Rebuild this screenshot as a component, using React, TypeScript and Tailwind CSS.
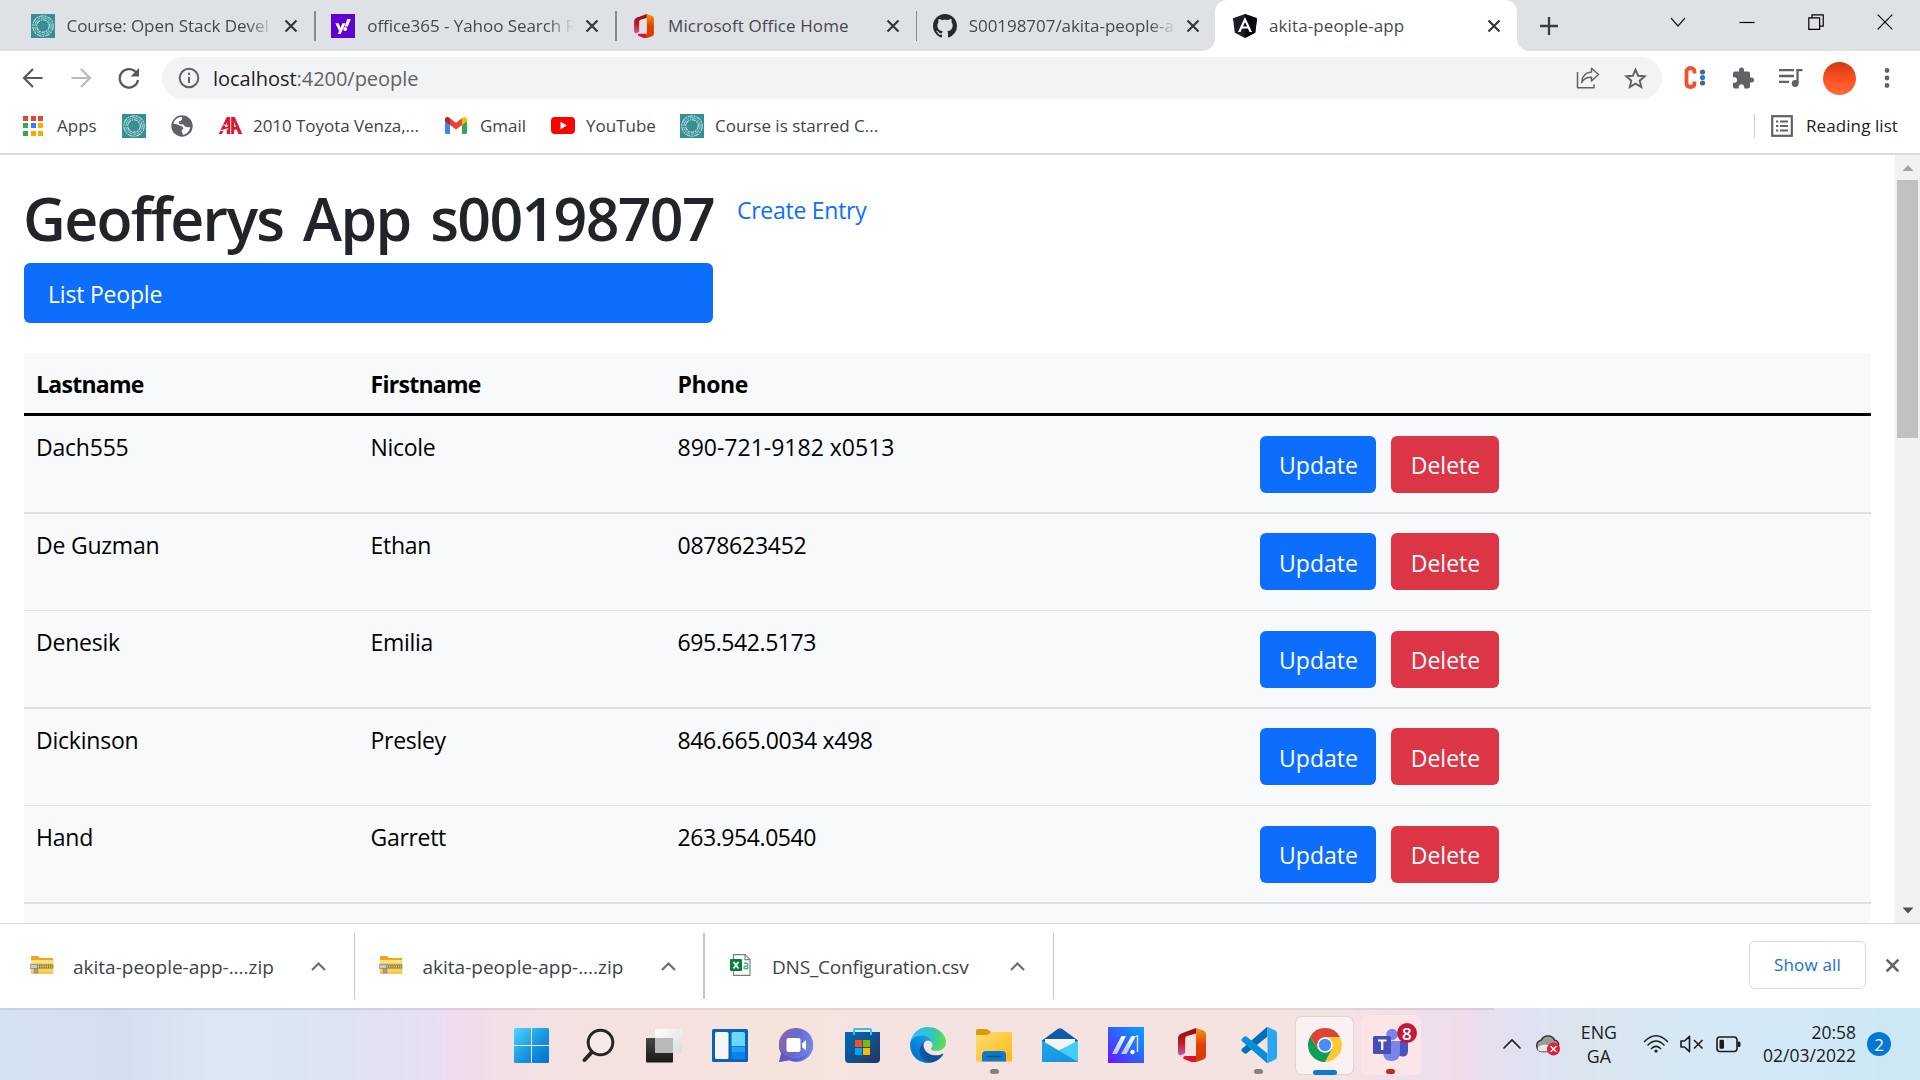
import React, { ReactNode } from "react";

/* ---------- favicons and toolbar icons ---------- */

function CourseIcon() {
  return (
    <svg width="24" height="24" viewBox="0 0 24 24" className="shrink-0">
      <rect width="24" height="24" fill="#378f96" />
      <g fill="none" stroke="#c5e4e5">
        <circle cx="12" cy="12" r="10.2" strokeWidth="1.2" strokeDasharray="5 .9 2 .8" opacity=".85" />
        <circle cx="12" cy="12" r="8.2" strokeWidth="1" strokeDasharray="3 1 6 .8" opacity=".8" />
        <circle cx="12" cy="12" r="6.3" strokeWidth="1.1" strokeDasharray="4 .9 1.6 .7" />
      </g>
    </svg>
  );
}

function YahooIcon() {
  return (
    <svg width="24" height="24" viewBox="0 0 24 24" className="shrink-0">
      <rect width="24" height="24" fill="#5f01d1" />
      <path d="M4.4 9.3h3.2l1.9 4.5 1.9-4.5h3.1L9.8 20H6.7l1.4-3.1z" fill="#fff" />
      <path d="M16.3 5h3.5l-3 7.6h-3.1z" fill="#fff" />
      <circle cx="14.2" cy="15" r="1.9" fill="#fff" />
    </svg>
  );
}

function OfficeIcon({ id, w, h }: { id: string; w: number; h: number }) {
  return (
    <svg width={w} height={h} viewBox="0 0 28 34" className="shrink-0">
      <defs>
        <linearGradient id={id + "a"} x1="0" y1="0" x2="0" y2="1">
          <stop offset="0" stopColor="#8e0b10" />
          <stop offset=".55" stopColor="#c11d20" />
          <stop offset="1" stopColor="#c05eb0" />
        </linearGradient>
        <linearGradient id={id + "b"} x1="0" y1="0" x2="0" y2="1">
          <stop offset="0" stopColor="#f79410" />
          <stop offset=".5" stopColor="#dd4208" />
          <stop offset="1" stopColor="#d83b01" />
        </linearGradient>
      </defs>
      <path d="M18 0 3.4 5.4Q0 7 0 10v14.4c0 2.6 2.6 4 4.6 2.4l2.6-1.7V10.4q0-1.6 1.8-2.3L18 5.5z" fill={"url(#" + id + "a)"} />
      <path d="M18 0l7.4 2.4Q28 3.4 28 6v22q0 2.6-2.6 3.6L18 34z" fill={"url(#" + id + "b)"} />
      <path d="M18 28H7.5c-2.6 0-3 2.2-1 3.2l6.4 2.5c1.5.5 3.6.4 5.1.3z" fill="#dd1430" />
    </svg>
  );
}

function GithubIcon() {
  return (
    <svg width="24" height="24" viewBox="0 0 16 16" className="shrink-0" fill="#24292f">
      <path d="M8 0C3.58 0 0 3.58 0 8c0 3.54 2.29 6.53 5.47 7.59.4.07.55-.17.55-.38 0-.19-.01-.82-.01-1.49-2.01.37-2.53-.49-2.69-.94-.09-.23-.48-.94-.82-1.13-.28-.15-.68-.52-.01-.53.63-.01 1.08.58 1.23.82.72 1.21 1.87.87 2.33.66.07-.52.28-.87.51-1.07-1.78-.2-3.64-.89-3.64-3.95 0-.87.31-1.59.82-2.15-.08-.2-.36-1.02.08-2.12 0 0 .67-.21 2.2.82.64-.18 1.32-.27 2-.27s1.36.09 2 .27c1.53-1.04 2.2-.82 2.2-.82.44 1.1.16 1.92.08 2.12.51.56.82 1.27.82 2.15 0 3.07-1.87 3.75-3.65 3.95.29.25.54.73.54 1.48 0 1.07-.01 1.93-.01 2.2 0 .21.15.46.55.38A8.01 8.01 0 0 0 16 8c0-4.42-3.58-8-8-8z" />
    </svg>
  );
}

function AngularIcon() {
  return (
    <svg width="24" height="24" viewBox="0 0 24 24" className="shrink-0">
      <path d="M12 0 0 4.2l1.8 14.6L12 24l10.200-5.200L24 4.200z" fill="#1b1f29" />
      <path d="M12 0v24l10.200-5.200L24 4.200z" fill="#05070d" />
      <path d="M12 3 5 18h2.600l1.400-3.500h6l1.400 3.500H19zm0 5 2.100 4.500H9.900z" fill="#fff" fillRule="evenodd" />
    </svg>
  );
}

function Cross({ size, color, width }: { size: number; color: string; width: number }) {
  return (
    <svg width={size} height={size} viewBox="0 0 14 14" className="shrink-0">
      <path d="M1.500 1.500l11 11m0-11l-11 11" stroke={color} strokeWidth={width} fill="none" />
    </svg>
  );
}

function AppsIcon() {
  const colors = ["#ea4335", "#ea4335", "#ea4335", "#34a853", "#2684fc", "#f9ab00", "#34a853", "#f9ab00", "#f9ab00"];
  return (
    <div className="grid h-5 w-5 shrink-0 grid-cols-3 gap-[2.500px]">
      {colors.map((c, i) => (
        <span key={i} style={{ backgroundColor: c }} />
      ))}
    </div>
  );
}

function GmailIcon() {
  return (
    <svg width="22" height="17" viewBox="0 0 22 17" className="shrink-0">
      <path d="M0 3v12.500Q0 17 1.500 17H5V7z" fill="#4285f4" />
      <path d="M22 3v12.500q0 1.500-1.500 1.500H17V7z" fill="#34a853" />
      <path d="M17 1.200V8l5-3.800V2.300C22 .2 19.700-.7 18 .5z" fill="#fbbc04" />
      <path d="M5 8V1.200l6 4.500 6-4.500V8l-6 4.500z" fill="#ea4335" />
      <path d="M0 2.300v1.900L5 8V1.200L4 .5C2.300-.7 0 .2 0 2.300z" fill="#c5221f" />
    </svg>
  );
}

/* ---------- browser chrome ---------- */

function Tab({ icon, title, active = false, last = false, wide = false }: { icon: ReactNode; title: string; active?: boolean; last?: boolean; wide?: boolean }) {
  return (
    <div className={active ? "relative -ml-[3px] flex h-full w-[302px] items-center rounded-t-[12px] bg-white pl-[18px]" : "relative flex h-full w-[300.750px] items-center pl-[15.500px]"}>
      {active && (
        <>
          <span className="absolute bottom-0 -left-[12px] h-3 w-3 bg-[radial-gradient(circle_at_0_0,#dee1e6_11.500px,#fff_12px)]" />
          <span className="absolute -right-[12px] bottom-0 h-3 w-3 bg-[radial-gradient(circle_at_100%_0,#dee1e6_11.500px,#fff_12px)]" />
        </>
      )}
      <span className="flex w-6 shrink-0 justify-center">{icon}</span>
      <span
        className={
          "ml-3 w-[207px] shrink-0 text-[17px] whitespace-nowrap text-[#45494d] " +
          (wide ? "tracking-[-0.050px] [mask-image:linear-gradient(to_right,#000_87%,transparent_100%)]" : "tracking-[0.100px]")
        }
      >
        {title}
      </span>
      <span className="ml-[10.500px] flex">
        <Cross size={14} color="#35383b" width={2.200} />
      </span>
      {!active && !last && <span className="ml-auto h-[30px] w-[1.500px] bg-[#85888c]" />}
    </div>
  );
}

function TabStrip() {
  return (
    <div className="flex h-[51px] bg-[#dee1e6] pl-[15px]">
      <Tab icon={<CourseIcon />} title="Course: Open Stack Devel" wide />
      <Tab icon={<YahooIcon />} title="office365 - Yahoo Search R" wide />
      <Tab icon={<OfficeIcon id="of1" w={20} h={24} />} title="Microsoft Office Home" />
      <Tab icon={<GithubIcon />} title="S00198707/akita-people-a" wide last />
      <Tab icon={<AngularIcon />} title="akita-people-app" active />
      <div className="flex flex-1 items-center">
        <svg width="18" height="18" viewBox="0 0 18 18" className="ml-[23px]">
          <path d="M9 0v18M0 9h18" stroke="#3a3d41" strokeWidth="2.300" />
        </svg>
        <div className="-mt-[8px] mr-[27px] ml-auto flex items-center gap-[53px]">
          <svg width="16" height="16" viewBox="0 0 16 16" fill="none" stroke="#202124" strokeWidth="1.200">
            <path d="M1 4l7 8 7-8" />
          </svg>
          <svg width="16" height="16" viewBox="0 0 16 16" fill="none" stroke="#000" strokeWidth="1.200">
            <path d="M.5 8.500h15" />
          </svg>
          <svg width="16" height="16" viewBox="0 0 16 16" fill="none" stroke="#000" strokeWidth="1.200">
            <path d="M.8 3.800h10.800v11.500H.8zM4 3.500V.8h11.200v11.300h-3.400" />
          </svg>
          <svg width="16" height="16" viewBox="0 0 16 16" fill="none" stroke="#000" strokeWidth="1.200">
            <path d="M.7.7l14.600 14.600M15.300.7L.7 15.300" />
          </svg>
        </div>
      </div>
    </div>
  );
}

function Toolbar() {
  return (
    <div className="flex h-[54px] items-center bg-white pl-[20px]">
      <svg width="26" height="24" viewBox="0 0 26 24" fill="none" stroke="#55595e" strokeWidth="2.200">
        <path d="M22.500 12H4.500M13 3l-9 9 9 9" />
      </svg>
      <svg width="26" height="24" viewBox="0 0 26 24" fill="none" stroke="#b9bbbe" strokeWidth="2.200" className="ml-[22px]">
        <path d="M3.500 12h18M13 3l9 9-9 9" />
      </svg>
      <svg width="22" height="22" viewBox="0 0 22 22" className="ml-[24px]">
        <path d="M18.600 6.200A9.200 9.200 0 1 0 20 13" fill="none" stroke="#55595e" strokeWidth="2.300" />
        <path d="M21 1v8.500h-8.500z" fill="#55595e" />
      </svg>
      <div className="ml-[22px] flex h-[42px] w-[1500px] items-center rounded-full bg-[#f1f3f4] pl-[16px]">
        <svg width="22" height="22" viewBox="0 0 22 22" fill="none" stroke="#5f6368" strokeWidth="2">
          <circle cx="11" cy="11" r="9.300" />
          <path d="M11 10v6M11 5.800v2.300" />
        </svg>
        <span className="ml-[13px] pt-[2px] text-[20px] tracking-[-0.030px] whitespace-nowrap text-[#5f6368]">
          <span className="text-[#202124]">localhost</span>:4200/people
        </span>
        <svg width="24" height="24" viewBox="0 0 24 24" fill="none" stroke="#5f6368" strokeWidth="1.500" className="ml-auto" strokeLinejoin="round">
          <path d="M1.500 6v15.700H18V18.500" />
          <path d="M15.500 2.200l7 6.300-7 6.500v-3.800c-4.500-.2-7.700 1.300-9.800 5.300.4-6 3.800-10.200 9.800-10.600z" />
        </svg>
        <svg width="23" height="23" viewBox="0 0 24 24" fill="none" stroke="#5f6368" strokeWidth="2" className="mr-[15px] ml-[24px]">
          <path d="M12 2.800l2.700 6.300 6.900.6-5.200 4.600 1.600 6.700L12 17.400 6 21l1.600-6.700-5.200-4.600 6.900-.6z" />
        </svg>
      </div>
      <svg width="24" height="26" viewBox="0 0 24 26" className="ml-[21px]">
        <path d="M11.500 8.500V7q0-4-4-4t-4 4v11q0 4 4 4t4-4v-1.500" fill="none" stroke="#f4512c" strokeWidth="3.800" />
        <circle cx="19.500" cy="7" r="2.600" fill="#5f6368" />
        <circle cx="19.500" cy="18" r="2.600" fill="#5f6368" />
        <circle cx="19.500" cy="12.500" r="2.600" fill="#1a7fe0" />
      </svg>
      <svg width="24" height="25" viewBox="0 0 24 24" fill="#5f6368" className="ml-[24px]">
        <path d="M20.500 11H19V7c0-1.100-.9-2-2-2h-4V3.500a2.500 2.500 0 0 0-5 0V5H4c-1.100 0-1.990.9-1.990 2v3.800H3.500c1.490 0 2.700 1.210 2.700 2.700s-1.210 2.700-2.700 2.700H2V20c0 1.100.9 2 2 2h3.800v-1.500c0-1.490 1.210-2.700 2.700-2.700s2.700 1.210 2.700 2.700V22H17c1.100 0 2-.9 2-2v-4h1.500a2.500 2.500 0 0 0 0-5z" />
      </svg>
      <svg width="25" height="22" viewBox="0 0 25 22" fill="none" stroke="#5f6368" strokeWidth="2.300" className="ml-[23px]">
        <path d="M1 3.200h15M1 9h15M1 14.800h10M24.500 3.200h-5V16" />
        <circle cx="17.200" cy="16.500" r="2.300" fill="#5f6368" />
      </svg>
      <span className="ml-[20px] h-[33px] w-[33px] rounded-full bg-linear-to-b from-[#cf3a15] via-[#fb4f1f] to-[#ff6c3a]" />
      <svg width="6" height="22" viewBox="0 0 6 22" fill="#5f6368" className="ml-[28px]">
        <circle cx="3" cy="3.500" r="2.400" />
        <circle cx="3" cy="11" r="2.400" />
        <circle cx="3" cy="18.500" r="2.400" />
      </svg>
    </div>
  );
}

function BookmarksBar() {
  return (
    <div className="flex h-[50px] items-center border-b-2 border-[#dadada] bg-white pr-[22px] pb-[7px] pl-[23px] text-[17px] whitespace-nowrap text-[#404347]">
      <AppsIcon />
      <span className="ml-[14px] w-[40px]">Apps</span>
      <span className="ml-[25px]">
        <CourseIcon />
      </span>
      <svg width="22" height="22" viewBox="0 0 22 22" className="ml-[25px] shrink-0">
        <circle cx="11" cy="11" r="10.700" fill="#5f6368" />
        <path d="M11.500 1.800c-1 1.600.3 2.600-1.300 3.600-1.600 1-2.700.6-2.500 2.500.2 1.500 2.300 1.200 4 1.400 1.500.2 1.300 1.800 2.700 2.400 1.500.5 3.200.6 4.800.2-.4 4-3.300 7.200-7.400 8 .3-1.800-1-2-1.200-3.700-.1-1.700 1.800-1.500 1.700-3.200-.2-1.900-2.500-1.800-4.300-2.800-1.600-.9-3.500-1.800-5.500-1.500C3.200 4.800 6.900 1.800 11.500 1.800z" fill="#fff" />
      </svg>
      <svg width="25" height="17" viewBox="0 0 25 18" className="ml-[25px] shrink-0" fill="#da1a32">
        <path d="M0 18 8.500 0h3.700v18H8.600v-4.500H5.500L3.500 18zM8.700 5.500 6.700 10.500h2z" fillRule="evenodd" />
        <path d="M13.200 0H17l8 18h-4.200l-1.600-4.500h-2.800V18h-3.200zM16.400 5v5.500h1.800z" fillRule="evenodd" />
        <path d="M2 14.500l8-2M5 8.500l5 1" stroke="#fff" strokeWidth="1.200" />
      </svg>
      <span className="ml-[10px] w-[167px] tracking-[-0.050px]">2010 Toyota Venza,...</span>
      <span className="ml-[25px] shrink-0">
        <GmailIcon />
      </span>
      <span className="ml-[13px] w-[46px]">Gmail</span>
      <svg width="24" height="17" viewBox="0 0 24 17" className="ml-[25px] shrink-0">
        <rect width="24" height="17" rx="4" fill="#f00" />
        <path d="M9.500 4.800v7.400l6.500-3.700z" fill="#fff" />
      </svg>
      <span className="ml-[11px] w-[70px]">YouTube</span>
      <span className="ml-[24px]">
        <CourseIcon />
      </span>
      <span className="ml-[11px]">Course is starred C...</span>
      <span className="ml-auto h-6 w-[1.500px] bg-[#c8cacd]" />
      <svg width="22" height="22" viewBox="0 0 22 22" fill="none" stroke="#5f6368" className="ml-[16px]">
        <rect x="1.200" y="1.200" width="19.600" height="19.600" strokeWidth="2.200" />
        <path d="M9 6.500h8M9 11h8M9 15.500h8" strokeWidth="2" />
        <path d="M5 6.500h2.300M5 11h2.300M5 15.500h2.300" strokeWidth="2.200" />
      </svg>
      <span className="ml-[13px] tracking-[0.080px] text-[#202124]">Reading list</span>
    </div>
  );
}

/* ---------- page ---------- */

const PEOPLE = [
  { last: "Dach555", first: "Nicole", phone: "890-721-9182 x0513", phoneTracking: "" },
  { last: "De Guzman", first: "Ethan", phone: "0878623452", phoneTracking: "tracking-[-0.250px]" },
  { last: "Denesik", first: "Emilia", phone: "695.542.5173", phoneTracking: "tracking-[-0.420px]" },
  { last: "Dickinson", first: "Presley", phone: "846.665.0034 x498", phoneTracking: "tracking-[-0.350px]" },
  { last: "Hand", first: "Garrett", phone: "263.954.0540", phoneTracking: "tracking-[-0.420px]" },
];

function PeopleTable() {
  return (
    <div className="mt-[30px] w-[1847px] bg-[#f8f9fa] text-[23px] text-black">
      <div className="grid h-[63px] grid-cols-[334.500px_307px_582.500px_1fr] items-center border-b-[3px] border-black pt-[2px] font-bold tracking-[-0.720px]">
        <span className="pl-3">Lastname</span>
        <span className="pl-3">Firstname</span>
        <span className="pl-3 tracking-[-0.400px]">Phone</span>
      </div>
      {PEOPLE.map((p, i) => (
        <div
          key={p.last}
          className={
            "grid grid-cols-[334.500px_307px_582.500px_1fr] border-[#dee2e6] " +
            (i % 2 === 0 ? "h-[98px] border-b-2" : "h-[97px] border-b")
          }
        >
          <span className="pt-[13px] pl-3 leading-9 tracking-[-0.220px]">{p.last}</span>
          <span className="pt-[13px] pl-3 leading-9 tracking-[-0.300px]">{p.first}</span>
          <span className={"pt-[13px] pl-3 leading-9 " + p.phoneTracking}>{p.phone}</span>
          <div className={"flex gap-[15px] pl-3 text-white " + (i % 2 === 0 ? "pt-[20px]" : "pt-[19px]")}>
            <button className={"h-[57px] w-[116px] rounded-[6px] bg-[#0d6efd] pl-px " + (i % 2 === 0 ? "pt-px" : "pt-[3px]")}>Update</button>
            <button className={"h-[57px] w-[108px] rounded-[6px] bg-[#dc3545] pl-px " + (i % 2 === 0 ? "pt-px" : "pt-[3px]")}>Delete</button>
          </div>
        </div>
      ))}
      <div className="h-[98px]" />
    </div>
  );
}

function Page() {
  return (
    <div className="flex h-[768px] overflow-hidden bg-white">
      <div className="flex-1 pt-[26px] pl-6">
        <div className="flex">
          <div className="w-[689px]">
            <h1 className="-ml-px h-[82px] text-[59px] leading-[75px] font-semibold tracking-[-1.650px] [word-spacing:6px] whitespace-nowrap text-[#212529]">Geofferys App s00198707</h1>
            <div className="flex h-[60px] items-center rounded-[6px] bg-[#0d6efd] pt-[2px] pl-6 text-[23px] tracking-[-0.200px] text-white">List People</div>
          </div>
          <a className="mt-[11px] ml-6 text-[23px] leading-9 tracking-[-0.270px] text-[#0d6efd]">Create Entry</a>
        </div>
        <PeopleTable />
      </div>
      <div className="flex w-[25px] flex-col items-center bg-[#f1f1f1]">
        <svg width="12" height="25" viewBox="0 0 12 25">
          <path d="M.5 16 6 10l5.500 6z" fill="#a3a3a3" />
        </svg>
        <span className="h-[258px] w-[21px] bg-[#c1c1c1]" />
        <svg width="12" height="25" viewBox="0 0 12 25" className="mt-auto">
          <path d="M.5 9.500 6 15.500l5.500-6z" fill="#505050" />
        </svg>
      </div>
    </div>
  );
}

/* ---------- downloads shelf ---------- */

function ZipIcon() {
  return (
    <svg width="24" height="18" viewBox="0 0 24 18" className="shrink-0">
      <path d="M1 1q0-1 1-1h6l2 2h12.500q.7 0 .7.700V5H1z" fill="#f0a51a" />
      <rect x="1" y="4" width="22.300" height="13.500" rx=".7" fill="#fcd053" />
      <path d="M1 4h22.300v3H1z" fill="#fde08a" />
      <path d="M1 16.700h22.300v.8H1z" fill="#e8a81c" />
      <path d="M7 8.500h16.300v4H7z" fill="#857745" />
      <path d="M8 10.500h15.300" stroke="#e9d893" strokeWidth="2" strokeDasharray="1.200 1" />
      <path d="M0 8.500h7.500v4H0z" fill="#c9c9c9" stroke="#8a8a8a" strokeWidth=".8" />
      <path d="M4.300 12.500h3.500V17H4.300z" fill="#a0a0a0" stroke="#777" strokeWidth=".6" />
    </svg>
  );
}

function CsvIcon() {
  return (
    <svg width="21" height="22" viewBox="0 0 21 22" className="shrink-0">
      <path d="M3.500.6h11.700l4.800 4.800v16H3.500z" fill="#fff" stroke="#7a7a7a" strokeWidth="1.100" />
      <path d="M15 .6v5h5" fill="none" stroke="#7a7a7a" strokeWidth="1.100" />
      <rect x="0" y="5" width="12" height="12" rx=".8" fill="#107c41" />
      <path d="M3.500 8l5 6.500M8.500 8l-5 6.500" stroke="#fff" strokeWidth="1.800" />
      <path d="M14 9.300h2.800q.8 0 .8.800v4.600h-2.400q-1.200 0-1.200-1.200 0-1.300 1.200-1.300h2.200" fill="none" stroke="#36c481" strokeWidth="1.500" />
    </svg>
  );
}

function DownloadItem({ icon, name, wide = false }: { icon: ReactNode; name: string; wide?: boolean }) {
  return (
    <div className="flex w-[349.500px] items-center">
      <span className="-mt-[2px] flex w-6 justify-center">{icon}</span>
      <span className={"ml-[19.500px] w-[202px] pt-[2px] text-[19px] whitespace-nowrap text-[#404347] " + (wide ? "tracking-[-0.200px]" : "")}>{name}</span>
      <svg width="15" height="9" viewBox="0 0 15 9" className="ml-[36px]" fill="none" stroke="#6b6f73" strokeWidth="2.200">
        <path d="M1 8l6.500-6.500L14 8" />
      </svg>
      <span className="ml-[27.500px] h-[66px] w-[1.500px] bg-[#c6c6c6]" />
    </div>
  );
}

function DownloadShelf() {
  return (
    <div className="flex h-[85px] border-t border-[#d8dade] bg-white pr-[20px] pl-[29.500px]">
      <DownloadItem icon={<ZipIcon />} name="akita-people-app-....zip" />
      <DownloadItem icon={<ZipIcon />} name="akita-people-app-....zip" />
      <DownloadItem icon={<CsvIcon />} name="DNS_Configuration.csv" wide />
      <button className="mt-[17px] ml-auto h-[48px] w-[117px] rounded-[6px] border border-[#d9dbdf] pb-px text-[17px] font-medium tracking-[0.200px] text-[#1a6ae8]">Show all</button>
      <span className="mt-[34px] ml-[19px]">
        <Cross size={15} color="#5f6368" width={2.400} />
      </span>
    </div>
  );
}

/* ---------- taskbar ---------- */

function StartIcon() {
  return (
    <svg width="35" height="35" viewBox="0 0 35 35">
      <defs>
        <linearGradient id="win" x1="0" y1="0" x2="1" y2="1">
          <stop offset="0" stopColor="#4fd5ff" />
          <stop offset=".55" stopColor="#1795e0" />
          <stop offset="1" stopColor="#0070d0" />
        </linearGradient>
      </defs>
      <path d="M1.500 0H17v17H0V1.500Q0 0 1.500 0zM18 0h15.500Q35 0 35 1.500V17H18zM0 18h17v17H1.500Q0 35 0 33.500zM18 18h17v15.500q0 1.500-1.500 1.500H18z" fill="url(#win)" />
    </svg>
  );
}

function SearchIcon() {
  return (
    <svg width="34" height="35" viewBox="0 0 34 35" fill="none" stroke="#262626" strokeLinecap="round">
      <circle cx="19.500" cy="14.500" r="12.300" strokeWidth="3" fill="#f7eae9" />
      <path d="M10.500 24.500 3.500 32" strokeWidth="4" />
    </svg>
  );
}

function TaskViewIcon() {
  return (
    <svg width="36" height="35" viewBox="0 0 36 35">
      <defs>
        <linearGradient id="tv" x1="0" y1="0" x2="0" y2="1">
          <stop offset="0" stopColor="#464646" />
          <stop offset="1" stopColor="#191919" />
        </linearGradient>
        <linearGradient id="tv2" x1="0" y1="0" x2="1" y2="1">
          <stop offset="0" stopColor="#fff" />
          <stop offset="1" stopColor="#dcdcdc" />
        </linearGradient>
      </defs>
      <rect x="9" y="1" width="27" height="24" rx="1" fill="url(#tv2)" />
      <rect x="0" y="10" width="27" height="24.500" rx="1" fill="url(#tv)" />
      <path d="M9 10h18v15H9z" fill="#b9b9b9" />
    </svg>
  );
}

function WidgetsIcon() {
  return (
    <svg width="36" height="33" viewBox="0 0 36 33">
      <rect width="36" height="33" rx="1.500" fill="#0a63b4" />
      <rect x="3" y="3" width="13.500" height="27" rx="1.500" fill="#f6f6f6" />
      <path d="M19.500 4.500q0-1.500 1.500-1.500h10.500Q33 3 33 4.500V17H19.500z" fill="#69d8ff" />
      <path d="M19.500 17.500H33v6H19.500z" fill="#1ea1f8" />
      <path d="M19.500 24H33v4.500q0 1.500-1.500 1.500H21q-1.500 0-1.500-1.500z" fill="#0b84ea" />
    </svg>
  );
}

function ChatIcon() {
  return (
    <svg width="34" height="34" viewBox="0 0 34 34">
      <defs>
        <linearGradient id="chat" x1="0" y1=".3" x2="1" y2=".5">
          <stop offset="0" stopColor="#8a64ad" />
          <stop offset=".5" stopColor="#6a68cc" />
          <stop offset="1" stopColor="#7489ea" />
        </linearGradient>
      </defs>
      <path d="M17.300 0a17 17 0 1 1-7.300 32.300L0 34l2-8.500A17 17 0 0 1 17.300 0z" fill="url(#chat)" />
      <path d="M3 24a17 17 0 0 0 27 0 17 17 0 0 1-20 8.300L0 34z" fill="#5352c8" opacity=".7" />
      <rect x="7.500" y="10" width="14" height="14" rx="2" fill="#fff" />
      <path d="M23 15.500 27 12v10.500l-4-3.500z" fill="#fff" />
    </svg>
  );
}

function StoreIcon() {
  return (
    <svg width="35" height="35" viewBox="0 0 35 35">
      <defs>
        <linearGradient id="store" x1="0" y1="0" x2="1" y2="1">
          <stop offset="0" stopColor="#0069bf" />
          <stop offset="1" stopColor="#22375f" />
        </linearGradient>
      </defs>
      <path d="M0 4h35v27q0 4-4 4H4q-4 0-4-4z" fill="url(#store)" />
      <path d="M9 7V2.200Q9 1 10.200 1h14.600Q26 1 26 2.200V7" fill="none" stroke="#2cc3f5" strokeWidth="2" />
      <path d="M10 12h7v7h-7z" fill="#f25022" />
      <path d="M18 12h7v7h-7z" fill="#7fba00" />
      <path d="M10 20h7v7h-7z" fill="#00a4ef" />
      <path d="M18 20h7v7h-7z" fill="#ffb900" />
    </svg>
  );
}

function EdgeIcon() {
  return (
    <svg width="36" height="36" viewBox="0 0 256 256">
      <defs>
        <linearGradient id="edA" x1="63" y1="178" x2="241" y2="178" gradientUnits="userSpaceOnUse">
          <stop offset="0" stopColor="#0c59a4" />
          <stop offset="1" stopColor="#114a8b" />
        </linearGradient>
        <linearGradient id="edB" x1="157" y1="101" x2="46" y2="222" gradientUnits="userSpaceOnUse">
          <stop offset="0" stopColor="#1b9de2" />
          <stop offset=".16" stopColor="#1595df" />
          <stop offset=".67" stopColor="#0680d7" />
          <stop offset="1" stopColor="#0078d4" />
        </linearGradient>
        <radialGradient id="edC" cx="26" cy="47" r="240" gradientUnits="userSpaceOnUse">
          <stop offset="0" stopColor="#35c1f1" />
          <stop offset=".25" stopColor="#2fbfe8" />
          <stop offset=".6" stopColor="#33c8b5" />
          <stop offset=".9" stopColor="#5bdb5c" />
        </radialGradient>
      </defs>
      <path d="M231 190.500c-3.400 1.800-6.900 3.400-10.500 4.700a101.900 101.900 0 0 1-35.900 6.500c-47.300 0-88.500-32.500-88.500-74.300a31.500 31.500 0 0 1 16.400-27.300c-42.800 1.800-53.800 46.400-53.800 72.500 0 73.900 68.100 81.400 82.800 81.400 7.900 0 19.800-2.300 27-4.600l1.300-.4a128.300 128.300 0 0 0 66.600-52.800 4 4 0 0 0-5.400-5.700z" fill="url(#edA)" />
      <path d="M105.700 241.400a79.200 79.200 0 0 1-22.700-21.300 80.700 80.700 0 0 1 29.500-120c3.200-1.500 8.500-4.200 15.600-4.100a32.400 32.400 0 0 1 25.700 13 31.900 31.900 0 0 1 6.300 18.700c0-.2 24.500-79.600-80-79.600-43.900 0-80 41.700-80 78.200a130.200 130.200 0 0 0 12.100 56 128 128 0 0 0 156.400 67 75.500 75.500 0 0 1-62.800-8z" fill="url(#edB)" />
      <path d="M152.300 148.900c-.8 1-3.300 2.500-3.300 5.700 0 2.600 1.700 5.100 4.700 7.200 14.400 10 41.500 8.700 41.600 8.700a59.600 59.600 0 0 0 30.300-8.300 61.400 61.400 0 0 0 30.400-52.900c.3-22.400-8-37.300-11.300-43.900C223.400 23.900 177.500 0 128 0A128 128 0 0 0 0 126.200c.5-36.500 36.800-66 80-66 3.500 0 23.500.3 42 10 16.300 8.600 24.900 18.900 30.800 29.200 6.200 10.700 7.300 24.100 7.300 29.500s-2.700 13.300-7.800 20z" fill="url(#edC)" />
    </svg>
  );
}

function ExplorerIcon() {
  return (
    <svg width="36" height="33" viewBox="0 0 36 33">
      <defs>
        <linearGradient id="fol" x1="0" y1="0" x2="1" y2="1">
          <stop offset="0" stopColor="#ffdd72" />
          <stop offset="1" stopColor="#fbb915" />
        </linearGradient>
      </defs>
      <path d="M0 1.500Q0 0 1.500 0H10q1.500 0 2.500 1l2 2H34v6H0z" fill="#dc9a0a" />
      <path d="M0 6h10q2 0 3.500-1.500L15 3h19.500Q36 3 36 4.500v27q0 1-1 1H1q-1 0-1-1z" fill="url(#fol)" />
      <path d="M6 32.500V26q0-4 4-4h16q4 0 4 4v6.500z" fill="#0f79c8" />
      <path d="M10.500 27.500h15" stroke="#0a4a82" strokeWidth="1.500" />
    </svg>
  );
}

function MailIcon() {
  return (
    <svg width="36" height="34" viewBox="0 0 36 34">
      <defs>
        <linearGradient id="mail" x1="0" y1="0" x2="1" y2="1">
          <stop offset="0" stopColor="#22a8e8" />
          <stop offset="1" stopColor="#1490dc" />
        </linearGradient>
      </defs>
      <path d="M0 12.500 16 .8q2-1.300 4 0l16 11.700v3H0z" fill="#0b5cab" />
      <path d="M3 11h30v13H3z" fill="#f4f4f4" />
      <path d="M36 12.500 14 24l22 10z" fill="#41cdf4" />
      <path d="M0 12.500 36 34H0z" fill="url(#mail)" />
    </svg>
  );
}

function MyAsusIcon() {
  return (
    <svg width="36" height="36" viewBox="0 0 36 36">
      <defs>
        <linearGradient id="asus" x1="0" y1="1" x2="1" y2="0">
          <stop offset="0" stopColor="#6a16ff" />
          <stop offset=".5" stopColor="#2b62ff" />
          <stop offset="1" stopColor="#04a6ff" />
        </linearGradient>
        <linearGradient id="asus2" x1="0" y1="0" x2="0" y2="1">
          <stop offset="0" stopColor="#fff" />
          <stop offset="1" stopColor="#b7c4ff" />
        </linearGradient>
      </defs>
      <rect width="36" height="36" fill="url(#asus)" />
      <path d="M13.500 9H18L9 27H4zM23.500 9H28L18.500 27H13z" fill="url(#asus2)" />
      <path d="M28 9h1.500v16" fill="none" stroke="#cfdcff" strokeWidth="1.500" />
      <circle cx="24.500" cy="25" r="2.200" fill="#fff" />
    </svg>
  );
}

function VsCodeIcon() {
  return (
    <svg width="36" height="36" viewBox="0 0 36 36">
      <path d="M26.500 9.500 5.800 26.300q-1.500 1-2.700-.1L1 24.300q-1.300-1.300 0-2.600L25 .8q2.500-1.500 1.500 2z" fill="#0071b8" />
      <path d="M26.500 26.500 5.800 9.700q-1.500-1-2.700.1L1 11.700q-1.300 1.300 0 2.600l24 20.900q2.500 1.500 1.500-2z" fill="#0a8fdb" />
      <path d="M26.500 0 34 3.300q2 1 2 3v23.400q0 2-2 3L26.500 36q-1 0-2-.8 2 .3 2-2V2.800q0-2.300-2-2 1-.8 2-.8z" fill="#29a7f2" />
    </svg>
  );
}

function ChromeIcon() {
  return (
    <svg width="34" height="34" viewBox="0 0 34 34">
      <path d="M17 9h14.900A17 17 0 0 1 17 34l7-13z" fill="#fcc934" />
      <path d="M10 21 2.300 8.500A17 17 0 0 0 17 34l7-13z" fill="#0f9d58" />
      <path d="M17 9h15A17 17 0 0 0 2.300 8.500L10 21z" fill="#db4437" />
      <circle cx="17" cy="17" r="7.800" fill="#fff" />
      <circle cx="17" cy="17" r="6.200" fill="#4c8bf5" />
    </svg>
  );
}

function TeamsIcon() {
  return (
    <svg width="36" height="34" viewBox="0 0 36 34">
      <circle cx="19" cy="6.500" r="5.700" fill="#7b83eb" />
      <path d="M24 13h11v10q0 5.500-5.500 5.500-3 0-5-2z" fill="#4b53bc" />
      <path d="M10 13h17v11q0 9-8.500 9T10 24z" fill="#7b83eb" />
      <rect y="8" width="18" height="18" rx="1.500" fill="#464eb8" />
      <path d="M5 12.500h8.500M9.250 12.500V22" stroke="#fff" strokeWidth="2.200" fill="none" />
    </svg>
  );
}

function Slot({ children, dot }: { children: ReactNode; dot?: boolean }) {
  return (
    <div className="relative flex h-full w-[66.100px] shrink-0 items-center justify-center pt-[2px]">
      {children}
      {dot && <span className="absolute bottom-[6px] h-[5px] w-[9px] rounded-full bg-[#878080]" />}
    </div>
  );
}

function Taskbar() {
  return (
    <div className="relative flex h-[72px] items-center bg-[linear-gradient(90deg,#d3e2f3_0px,#d3dff1_115px,#d9e8f2_210px,#d9e8f2_260px,#dde3f0_340px,#e5e0f0_420px,#eedcef_450px,#efdcee_475px,#f3e0e6_500px,#f4e2e0_600px,#f5e2e0_680px,#f5e4dc_780px,#f5e3e2_900px,#f5e3e2_1340px,#f0deea_1400px,#eedfec_1440px,#f1dde9_1455px,#ecdcee_1475px,#e2e1ef_1510px,#d8e6ee_1600px,#d6e8f6_1700px,#d2e8f6_1800px,#cbe8f4_1920px)] pl-[498.500px] text-[#1b1b1b]">
      <span className="absolute top-0 left-0 h-[2px] w-[1494px] bg-black/7" />
      <Slot><StartIcon /></Slot>
      <Slot><SearchIcon /></Slot>
      <Slot><TaskViewIcon /></Slot>
      <Slot><WidgetsIcon /></Slot>
      <Slot><ChatIcon /></Slot>
      <Slot><StoreIcon /></Slot>
      <Slot><EdgeIcon /></Slot>
      <Slot dot><ExplorerIcon /></Slot>
      <Slot><MailIcon /></Slot>
      <Slot><MyAsusIcon /></Slot>
      <Slot><OfficeIcon id="of2" w={28} h={34} /></Slot>
      <Slot dot><VsCodeIcon /></Slot>
      <Slot>
        <span className="relative flex h-[57px] w-[57px] items-center justify-center rounded-[6px] bg-[#faf2f2] shadow-[0_0_1px_1px_rgba(0,0,0,0.08)]">
          <ChromeIcon />
          <span className="absolute -bottom-px h-[5px] w-6 rounded-full bg-[#0a78d4]" />
        </span>
      </Slot>
      <Slot>
        <span className="relative flex h-[60px] w-[60px] items-center justify-center rounded-[6px] bg-[#fce5e7]">
          <TeamsIcon />
          <span className="absolute top-[8px] right-[4px] flex h-5 w-5 items-center justify-center rounded-full bg-[#c4183a] text-[17px] leading-none font-semibold text-white">8</span>
          <span className="absolute bottom-px h-[5px] w-[9px] rounded-full bg-[#c42b1c]" />
        </span>
      </Slot>
      <svg width="20" height="12" viewBox="0 0 20 12" fill="none" stroke="#1b1b1b" strokeWidth="1.600" className="ml-[78px] shrink-0">
        <path d="M1.500 10.500 10 2l8.500 8.500" />
      </svg>
      <svg width="26" height="22" viewBox="0 0 26 22" className="mt-[2px] ml-[13px] shrink-0">
        <path d="M7 17.500a5.800 5.800 0 0 1-.8-11.400 7.500 7.500 0 0 1 13.500 0 5 5 0 0 1 4 4.500L14 17.500z" fill="#9a9a9a" stroke="#2a2a2a" strokeWidth="1.400" />
        <path d="M2.500 14q4-5 12-3l-2 6.500H6q-3 0-3.500-3.500z" fill="#e8e8e8" />
        <circle cx="18.500" cy="15" r="6.500" fill="#e02133" />
        <path d="M15.700 12.200l5.600 5.600m0-5.600l-5.600 5.600" stroke="#fff" strokeWidth="1.500" />
      </svg>
      <div className="mt-px ml-[20px] w-[36px] text-center text-[17.750px] leading-[23.500px]">
        <div>ENG</div>
        <div>GA</div>
      </div>
      <svg width="26" height="20" viewBox="0 0 26 20" fill="none" stroke="#1b1b1b" strokeWidth="1.600" strokeLinecap="round" className="ml-[26px] shrink-0">
        <path d="M1.500 7.500q11.500-11.500 23 0M5 11q8-8 16 0M8.500 14.500q4.500-4.300 9 0" />
        <circle cx="13" cy="17" r="1.600" fill="#1b1b1b" stroke="none" />
      </svg>
      <svg width="24" height="18" viewBox="0 0 24 18" fill="none" stroke="#1b1b1b" strokeWidth="1.600" strokeLinejoin="round" className="ml-[11px] shrink-0">
        <path d="M1 6h3.500L9.500 1.300v15.400L4.500 12H1z" />
        <path d="M14 5l8.500 8.500m0-8.500L14 13.500" />
      </svg>
      <svg width="25" height="17" viewBox="0 0 25 17" className="ml-[12px] shrink-0">
        <rect x="1" y="1" width="20" height="14.500" rx="3" fill="none" stroke="#1b1b1b" strokeWidth="1.600" />
        <rect x="3.500" y="3.700" width="4.500" height="9" rx="1" fill="#1b1b1b" />
        <path d="M21.500 5.500h1.500q1.500 0 1.500 1.500v2.500q0 1.500-1.500 1.500h-1.500z" fill="#1b1b1b" />
      </svg>
      <div className="ml-auto text-right text-[17.500px] leading-[23px] whitespace-nowrap">
        <div>20:58</div>
        <div>02/03/2022</div>
      </div>
      <span className="mr-[29px] ml-[11px] flex h-6 w-6 shrink-0 items-center justify-center rounded-full bg-[#0078d4] text-[17px] leading-none text-white">2</span>
    </div>
  );
}

export default function App() {
  return (
    <div className="flex h-[1080px] w-[1920px] flex-col overflow-hidden bg-white font-['Open_Sans','Noto_Sans',sans-serif]">
      <TabStrip />
      <Toolbar />
      <BookmarksBar />
      <Page />
      <DownloadShelf />
      <Taskbar />
    </div>
  );
}
